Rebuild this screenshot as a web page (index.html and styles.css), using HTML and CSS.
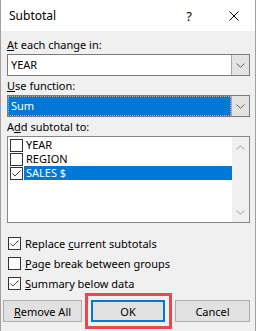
FILE: index.html
```html
<!DOCTYPE html>
<html lang="en">
<head>
  <meta charset="UTF-8">
  <title>Subtotal</title>
  <link rel="stylesheet" href="styles.css">
</head>
<body>
  <div class="dialog">
    <div class="titlebar">
      <span class="title">Subtotal</span>
      <span class="help">?</span>
      <svg class="close" width="10" height="10" viewBox="0 0 10 10"><path d="M0.5 0.5L9.5 9.5M9.5 0.5L0.5 9.5" stroke="#000" stroke-width="1"/></svg>
    </div>

    <div class="content">
      <div class="label lbl-first"><u>A</u>t each change in:</div>
      <div class="combo">
        <div class="combo-value">YEAR</div>
        <div class="combo-btn"><svg width="9" height="5" viewBox="0 0 9 5"><path d="M0.5 0.5L4.5 4.3L8.5 0.5" fill="none" stroke="#606060"/></svg></div>
      </div>

      <div class="label"><u>U</u>se function:</div>
      <div class="combo">
        <div class="combo-value selected">Sum</div>
        <div class="combo-btn"><svg width="9" height="5" viewBox="0 0 9 5"><path d="M0.5 0.5L4.5 4.3L8.5 0.5" fill="none" stroke="#606060"/></svg></div>
      </div>

      <div class="label">A<u>d</u>d subtotal to:</div>
      <div class="listbox">
        <div class="items">
          <div class="item">
            <svg class="cb" width="13" height="13" viewBox="0 0 13 13"><rect x="0.5" y="0.5" width="12" height="12" fill="#fff" stroke="#333"/></svg>
            <span class="item-text">YEAR</span>
          </div>
          <div class="item">
            <svg class="cb" width="13" height="13" viewBox="0 0 13 13"><rect x="0.5" y="0.5" width="12" height="12" fill="#fff" stroke="#333"/></svg>
            <span class="item-text">REGION</span>
          </div>
          <div class="item">
            <svg class="cb" width="13" height="13" viewBox="0 0 13 13"><rect x="0.5" y="0.5" width="12" height="12" fill="#fff" stroke="#333"/><path d="M2.5 6.5L5 9L10.5 3.5" fill="none" stroke="#444"/></svg>
            <span class="item-text sel">SALES $</span>
          </div>
        </div>
        <div class="scrollbar">
          <svg width="9" height="5" viewBox="0 0 9 5"><path d="M0.5 4.5L4.5 0.8L8.5 4.5" fill="none" stroke="#c2c2c2" stroke-width="1.4"/></svg>
          <svg width="9" height="5" viewBox="0 0 9 5"><path d="M0.5 0.5L4.5 4.2L8.5 0.5" fill="none" stroke="#c2c2c2" stroke-width="1.4"/></svg>
        </div>
      </div>

      <div class="options">
        <div class="option">
          <svg class="cb" width="13" height="13" viewBox="0 0 13 13"><rect x="0.5" y="0.5" width="12" height="12" fill="#fff" stroke="#333"/><path d="M2.5 6.5L5 9L10.5 3.5" fill="none" stroke="#444"/></svg>
          <span>Replace <u>c</u>urrent subtotals</span>
        </div>
        <div class="option">
          <svg class="cb" width="13" height="13" viewBox="0 0 13 13"><rect x="0.5" y="0.5" width="12" height="12" fill="#fff" stroke="#333"/></svg>
          <span><u>P</u>age break between groups</span>
        </div>
        <div class="option">
          <svg class="cb" width="13" height="13" viewBox="0 0 13 13"><rect x="0.5" y="0.5" width="12" height="12" fill="#fff" stroke="#333"/><path d="M2.5 6.5L5 9L10.5 3.5" fill="none" stroke="#444"/></svg>
          <span><u>S</u>ummary below data</span>
        </div>
      </div>

      <div class="buttons">
        <button class="btn btn-remove"><u>R</u>emove All</button>
        <div class="highlight">
          <button class="btn btn-ok">OK</button>
        </div>
        <button class="btn btn-cancel">Cancel</button>
      </div>
    </div>
  </div>
</body>
</html>
```

FILE: styles.css
```css
body {
  margin: 0;
  background: #fff;
  font-family: "Noto Sans", sans-serif;
  font-size: 11px;
  color: #000;
}
.dialog {
  width: 256px;
  height: 331px;
  box-sizing: border-box;
  border-left: 1px solid #a0a0a0;
  border-right: 1px solid #a0a0a0;
  background: #f0f0f0;
  overflow: hidden;
}
.titlebar {
  height: 31px;
  background: #fff;
  display: flex;
  align-items: center;
  padding-left: 8px;
  font-size: 12px;
}
.title {
  flex: 1;
}
.help {
  margin-right: 37px;
  font-size: 13px;
}
.close {
  margin-right: 16px;
}
.content {
  padding: 0 5px 0 6px;
}
.label {
  line-height: 15px;
  margin-top: 2px;
}
.lbl-first {
  margin-top: 6px;
}
.combo {
  display: flex;
  height: 22px;
  margin-top: 2px;
  box-sizing: border-box;
  border: 1px solid #7a7a7a;
  background: #fff;
}
.combo-value {
  flex: 1;
  padding-left: 3px;
  line-height: 20px;
}
.combo-value.selected {
  background: #0078d7;
  color: #fff;
  outline: 1px dotted #f4a640;
  outline-offset: -1px;
}
.combo-btn {
  width: 17px;
  background: #e3e3e3;
  border-left: 1px solid #a8a8a8;
  display: flex;
  align-items: center;
  justify-content: center;
}
.listbox {
  display: flex;
  height: 87px;
  margin-top: 2px;
  box-sizing: border-box;
  border: 1px solid #828790;
  background: #fff;
}
.items {
  flex: 1;
  padding: 1px 0 0 2px;
}
.item {
  display: flex;
  align-items: center;
  height: 14px;
}
.item-text {
  line-height: 14px;
  padding: 0 2px;
  margin-left: 1px;
}
.item-text.sel {
  flex: 1;
  background: #0078d7;
  color: #fff;
}
.scrollbar {
  width: 17px;
  background: #f0f0f0;
  display: flex;
  flex-direction: column;
  justify-content: space-between;
  align-items: center;
  padding: 8px 0 7px;
}
.options {
  margin-top: 10px;
}
.option {
  display: flex;
  height: 20px;
  align-items: center;
  gap: 4px;
  padding-left: 1px;
}
.buttons {
  display: flex;
  align-items: center;
  margin-left: -4px;
}
.btn {
  height: 22px;
  font-family: "Noto Sans", sans-serif;
  font-size: 11px;
  color: #000;
  background: #e1e1e1;
  border: 1px solid #adadad;
  padding: 0;
}
.btn-remove {
  width: 79px;
}
.highlight {
  margin-left: 3px;
  border: 3px solid #e8484e;
  padding: 4px 4px 4px 3px;
}
.btn-ok {
  display: block;
  width: 74px;
  border: 2px solid #0078d7;
}
.btn-cancel {
  width: 75px;
  margin-left: 3px;
}
```
